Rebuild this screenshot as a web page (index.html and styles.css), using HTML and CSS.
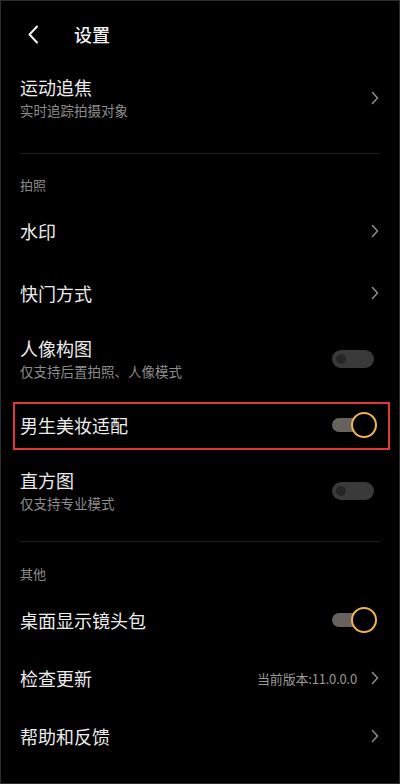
FILE: index.html
```html
<!DOCTYPE html>
<html lang="zh">
<head>
  <meta charset="UTF-8" />
  <meta name="viewport" content="width=device-width, initial-scale=1.0" />
  <title>设置</title>
  <link rel="stylesheet" href="styles.css">
</head>
<body>
  <div class="screen">
    <header class="topbar">
      <span class="back">
        <svg width="12" height="19" viewBox="0 0 12 19"><path d="M10 1.5 L2.5 9.5 L10 17.5" fill="none" stroke="#f2f2f2" stroke-width="2" stroke-linecap="round" stroke-linejoin="round"/></svg>
      </span>
      <h1>设置</h1>
    </header>

    <div class="row first">
      <div class="text">
        <div class="title">运动追焦</div>
        <div class="sub">实时追踪拍摄对象</div>
      </div>
      <svg class="chevron" width="8" height="14" viewBox="0 0 8 14"><path d="M1.5 1.5 L6.5 7 L1.5 12.5" fill="none" stroke="#8a8a8a" stroke-width="1.6" stroke-linecap="round" stroke-linejoin="round"/></svg>
    </div>

    <div class="divider"></div>
    <div class="label">拍照</div>

    <div class="row">
      <div class="title">水印</div>
      <svg class="chevron" width="8" height="14" viewBox="0 0 8 14"><path d="M1.5 1.5 L6.5 7 L1.5 12.5" fill="none" stroke="#8a8a8a" stroke-width="1.6" stroke-linecap="round" stroke-linejoin="round"/></svg>
    </div>

    <div class="row">
      <div class="title">快门方式</div>
      <svg class="chevron" width="8" height="14" viewBox="0 0 8 14"><path d="M1.5 1.5 L6.5 7 L1.5 12.5" fill="none" stroke="#8a8a8a" stroke-width="1.6" stroke-linecap="round" stroke-linejoin="round"/></svg>
    </div>

    <div class="row two">
      <div class="text">
        <div class="title">人像构图</div>
        <div class="sub">仅支持后置拍照、人像模式</div>
      </div>
      <span class="switch off"><span class="knob"></span></span>
    </div>

    <div class="row highlight">
      <div class="title">男生美妆适配</div>
      <span class="switch on"><span class="track"></span><span class="knob"></span></span>
    </div>

    <div class="row two">
      <div class="text">
        <div class="title">直方图</div>
        <div class="sub">仅支持专业模式</div>
      </div>
      <span class="switch off"><span class="knob"></span></span>
    </div>

    <div class="divider second"></div>
    <div class="label other">其他</div>

    <div class="row short">
      <div class="title">桌面显示镜头包</div>
      <span class="switch on"><span class="track"></span><span class="knob"></span></span>
    </div>

    <div class="row short">
      <div class="title">检查更新</div>
      <div class="right">
        <span class="value">当前版本:11.0.0.0</span>
        <svg class="chevron" width="8" height="14" viewBox="0 0 8 14"><path d="M1.5 1.5 L6.5 7 L1.5 12.5" fill="none" stroke="#8a8a8a" stroke-width="1.6" stroke-linecap="round" stroke-linejoin="round"/></svg>
      </div>
    </div>

    <div class="row short">
      <div class="title">帮助和反馈</div>
      <svg class="chevron" width="8" height="14" viewBox="0 0 8 14"><path d="M1.5 1.5 L6.5 7 L1.5 12.5" fill="none" stroke="#8a8a8a" stroke-width="1.6" stroke-linecap="round" stroke-linejoin="round"/></svg>
    </div>
  </div>
</body>
</html>
```

FILE: styles.css
```css
* {
  box-sizing: border-box;
  font-family: "Noto Sans CJK SC", "Noto Sans", sans-serif;
}

body {
  margin: 0;
  background-color: #000;
  color: #ececec;
}

.screen {
  width: 400px;
  height: 784px;
  background: #000;
  box-shadow: inset 0 0 0 1px #2e2e2e;
  overflow: hidden;
}

/* Шапка */
.topbar {
  height: 68px;
  display: flex;
  align-items: center;
  padding-left: 27px;
}

.back {
  display: flex;
  width: 12px;
}

.topbar h1 {
  margin: 0 0 0 35px;
  font-size: 18px;
  font-weight: 500;
  line-height: 22px;
  color: #f0f0f0;
}

/* Строки */
.row {
  position: relative;
  height: 62px;
  display: flex;
  align-items: center;
  justify-content: space-between;
  padding: 0 20px;
}

.row.first {
  height: 60px;
}

.row.two {
  height: 70px;
}

.row.short {
  height: 58px;
}

.text {
  display: flex;
  flex-direction: column;
  padding-bottom: 3px;
}

.title {
  font-size: 18px;
  line-height: 22px;
  color: #ececec;
}

.text .title {
  line-height: 26px;
}

.sub {
  font-size: 13.5px;
  line-height: 20px;
  color: #8c8c8c;
}

.chevron {
  display: block;
  margin-right: 1px;
}

.right {
  display: flex;
  align-items: center;
  gap: 14px;
}

.value {
  font-size: 13px;
  color: #9a9a9a;
  letter-spacing: -0.2px;
}

.divider {
  margin: 25px 20px 0;
  height: 1px;
  background: #1f1f1f;
}

.divider.second {
  margin-top: 15px;
}

.label {
  padding: 22px 20px 6px;
  font-size: 13px;
  line-height: 18px;
  color: #8a8a8a;
}

.label.other {
  padding: 23px 20px 8px;
}

/* Переключатели */
.switch {
  display: flex;
  align-items: center;
}

.switch.off {
  width: 42px;
  height: 18px;
  margin-right: 6px;
  padding-left: 4px;
  border-radius: 9px;
  background: #3a3a3a;
}

.switch.off .knob {
  width: 10px;
  height: 10px;
  border-radius: 50%;
  background: #262626;
}

.switch.on {
  margin-right: 3px;
}

.switch.on .track {
  width: 32px;
  height: 14px;
  border-radius: 7px;
  background: #67625d;
}

.switch.on .knob {
  width: 26px;
  height: 26px;
  margin-left: -13px;
  border-radius: 50%;
  background: #000;
  border: 2.5px solid #f2b24c;
}

/* Красная рамка выделения */
.highlight::after {
  content: "";
  position: absolute;
  left: 13px;
  right: 10px;
  top: 8px;
  bottom: 6px;
  border: 2px solid #e1363c;
}
```
